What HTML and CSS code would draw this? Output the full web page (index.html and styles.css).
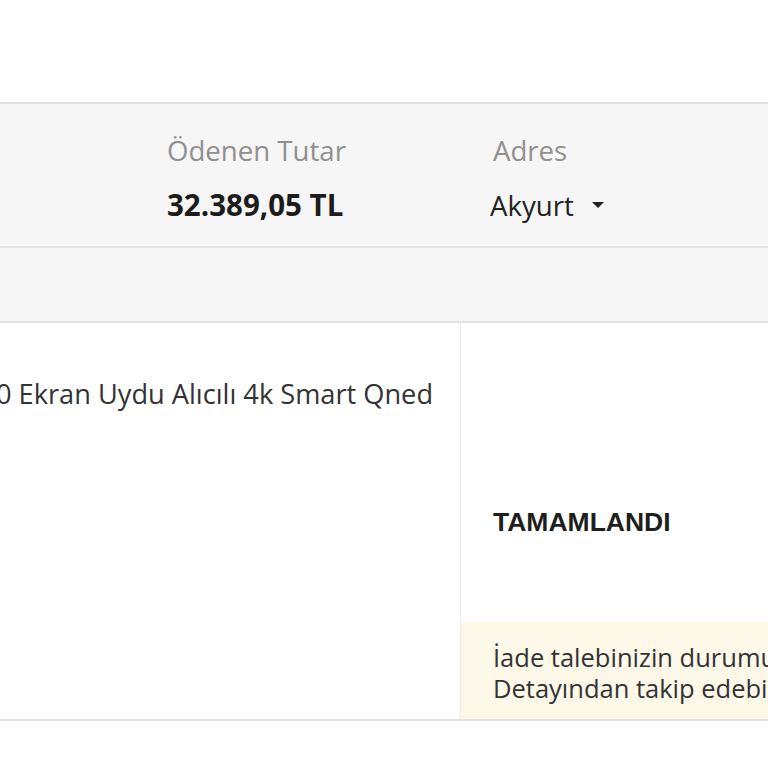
FILE: index.html
```html
<!DOCTYPE html>
<html lang="tr">
<head>
    <meta charset="UTF-8">
    <meta name="viewport" content="width=device-width, initial-scale=1.0">
    <title>Sipariş Detayı</title>
    <link rel="stylesheet" href="styles.css">
</head>
<body>
    <div class="order">
        <div class="order-summary">
            <div class="summary-item paid">
                <span class="summary-label">Ödenen Tutar</span>
                <span class="summary-value">32.389,05 TL</span>
            </div>
            <div class="summary-item address">
                <span class="summary-label">Adres</span>
                <button class="address-toggle">
                    Akyurt
                    <span class="caret"></span>
                </button>
            </div>
        </div>
        <div class="order-band"></div>
        <div class="order-row">
            <div class="product-cell">
                <p class="product-name">0 Ekran Uydu Alıcılı 4k Smart Qned</p>
            </div>
            <div class="status-cell">
                <div class="status">TAMAMLANDI</div>
                <div class="return-note">
                    <span class="note-line">İade talebinizin durumunu İade</span>
                    <span class="note-line">Detayından takip edebilirsiniz.</span>
                </div>
            </div>
        </div>
    </div>
</body>
</html>
```

FILE: styles.css
```css
body {
    margin: 0;
    padding: 0;
    background: #fff;
    font-family: 'Open Sans', 'Liberation Sans', sans-serif;
    color: #333;
    overflow: hidden;
}

.order {
    padding-top: 102px;
}

.order-summary {
    display: flex;
    height: 146px;
    box-sizing: border-box;
    padding: 28px 0 0 167px;
    background: #f6f6f6;
    border-top: 2px solid #e2e2e2;
    border-bottom: 2px solid #e4e4e4;
}

.summary-item {
    display: flex;
    flex-direction: column;
}

.summary-item.paid {
    width: 326px;
}

.summary-label {
    font-size: 27.6px;
    line-height: 36px;
    color: #909090;
}

.summary-value {
    margin-top: 19px;
    font-size: 29.5px;
    line-height: 36px;
    font-weight: 700;
    color: #1c1c1c;
}

.address-toggle {
    display: flex;
    align-items: center;
    gap: 18px;
    margin: 19px 0 0 -3px;
    padding: 0;
    border: none;
    background: none;
    font-family: inherit;
    font-size: 27.6px;
    line-height: 36px;
    color: #222;
    cursor: pointer;
}

.caret {
    width: 0;
    height: 0;
    border-left: 6px solid transparent;
    border-right: 6px solid transparent;
    border-top: 6px solid #222;
}

.order-band {
    height: 75px;
    box-sizing: border-box;
    background: #f6f6f6;
    border-bottom: 2px solid #e4e4e4;
}

.order-row {
    display: flex;
    border-bottom: 2px solid #e2e2e2;
}

.product-cell {
    width: 460px;
    border-right: 1px solid #ececec;
}

.product-name {
    margin: 0 0 0 -4px;
    padding-top: 53px;
    font-size: 27.2px;
    line-height: 36px;
    color: #333;
    white-space: nowrap;
}

.status-cell {
    flex: 1;
    min-width: 0;
    display: flex;
    flex-direction: column;
}

.status {
    height: 299px;
    box-sizing: border-box;
    padding: 184px 0 0 32px;
    font-family: 'Liberation Sans', Arial, sans-serif;
    font-size: 26.5px;
    line-height: 30px;
    font-weight: 700;
    color: #1e1e1e;
}

.return-note {
    height: 97px;
    box-sizing: border-box;
    padding: 20px 0 0 32px;
    background: #fdf8e8;
    overflow: hidden;
    white-space: nowrap;
}

.note-line {
    display: block;
    font-size: 25.5px;
    line-height: 31px;
    color: #333;
}
```
